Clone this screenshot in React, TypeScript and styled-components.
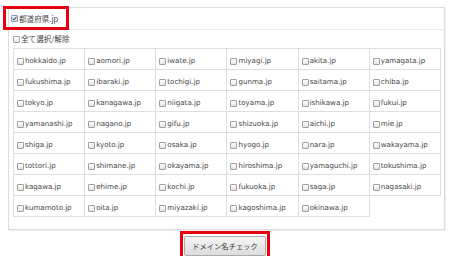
import { styled, createGlobalStyle } from "styled-components";

const GlobalStyle = createGlobalStyle`
  html, body {
    margin: 0;
    padding: 0;
    background: #FFFFFF;
  }
  body {
    font-family: "DejaVu Sans", "Noto Sans CJK JP", sans-serif;
    color: #333333;
  }
`;

const prefectures = [
  "hokkaido", "aomori", "iwate", "miyagi", "akita", "yamagata",
  "fukushima", "ibaraki", "tochigi", "gunma", "saitama", "chiba",
  "tokyo", "kanagawa", "niigata", "toyama", "ishikawa", "fukui",
  "yamanashi", "nagano", "gifu", "shizuoka", "aichi", "mie",
  "shiga", "kyoto", "osaka", "hyogo", "nara", "wakayama",
  "tottori", "shimane", "okayama", "hiroshima", "yamaguchi", "tokushima",
  "kagawa", "ehime", "kochi", "fukuoka", "saga", "nagasaki",
  "kumamoto", "oita", "miyazaki", "kagoshima", "okinawa",
];

const Page = styled.div`
  width: 450px;
  padding-top: 7px;
`;

const Panel = styled.div`
  margin-left: 8px;
  width: 435px;
  border: 1px solid #DDDDDD;
  box-shadow: 1px 1px 0 #EEEEEE;
  padding-bottom: 12px;
`;

const Header = styled.div`
  position: relative;
  height: 21px;
  display: flex;
  align-items: center;
  padding-left: 2px;
  border-bottom: 1px solid #E8E8E8;
`;

const Highlight = styled.div<{ $left: number; $top: number; $width: number; $height: number }>`
  position: absolute;
  left: ${p => p.$left}px;
  top: ${p => p.$top}px;
  width: ${p => p.$width}px;
  height: ${p => p.$height}px;
  border: 3px solid #E60012;
  box-sizing: border-box;
  pointer-events: none;
`;

const Label = styled.label<{ $jp?: boolean }>`
  display: inline-flex;
  align-items: center;
  gap: 1px;
  font-family: ${p => p.$jp ? '"Noto Sans CJK JP", sans-serif' : '"DejaVu Sans", "Noto Sans CJK JP", sans-serif'};
  font-size: ${p => p.$jp ? '7.6px' : '7.1px'};
  color: #444444;
  white-space: nowrap;
  line-height: 1;
`;

const Box = styled.span<{ $checked?: boolean }>`
  display: inline-flex;
  align-items: center;
  justify-content: center;
  width: 7px;
  height: 7px;
  box-sizing: border-box;
  border: 1px solid ${p => p.$checked ? '#7A9CC4' : '#A0A0A0'};
  background: ${p => p.$checked ? 'linear-gradient(#E8F0FA, #C9D9EE)' : 'linear-gradient(#FFFFFF, #E4E4E4)'};
  border-radius: 1px;
  flex-shrink: 0;
`;

const SelectAll = styled.div`
  height: 16px;
  display: flex;
  align-items: center;
  padding-left: 4px;
  margin-top: 1px;
`;

const Grid = styled.table`
  margin: 1px 0 0 4px;
  width: 428px;
  border-collapse: collapse;
  table-layout: fixed;
`;

const Cell = styled.td`
  height: 20px;
  padding: 0 0 0 3px;
  border: 1px solid #DEDEDE;
  vertical-align: middle;
`;

const ButtonRow = styled.div`
  position: relative;
  display: flex;
  justify-content: center;
  padding-top: 6px;
`;

const CheckButton = styled.button`
  width: 82px;
  height: 20px;
  padding: 0;
  border: 1px solid #ABABAB;
  border-radius: 2px;
  background: linear-gradient(#F6F6F6, #DCDCDC);
  font-family: "Noto Sans CJK JP", sans-serif;
  font-size: 7.3px;
  color: #333333;
  cursor: pointer;
`;

const Check = ({ checked }: { checked?: boolean }) => (
  <Box $checked={checked}>
    {checked && (
      <svg width="7" height="7" viewBox="0 0 7 7">
        <path d="M1 3.6 L2.8 5.4 L6.2 1" fill="none" stroke="#222" strokeWidth="1.3" />
      </svg>
    )}
  </Box>
);

const App = () => {
  const rows: string[][] = [];
  for (let i = 0; i < prefectures.length; i += 6) {
    rows.push(prefectures.slice(i, i + 6));
  }

  return (
    <Page>
      <GlobalStyle />
      <Panel>
        <Header>
          <Label $jp>
            <Check checked />
            都道府県.jp
          </Label>
          <Highlight $left={-6} $top={-2} $width={66} $height={24} />
        </Header>
        <SelectAll>
          <Label $jp>
            <Check />
            全て選択/解除
          </Label>
        </SelectAll>
        <Grid>
          <tbody>
            {rows.map((row, r) => (
              <tr key={r}>
                {row.map(name => (
                  <Cell key={name}>
                    <Label>
                      <Check />
                      {name}.jp
                    </Label>
                  </Cell>
                ))}
              </tr>
            ))}
          </tbody>
        </Grid>
      </Panel>
      <ButtonRow>
        <CheckButton>ドメイン名チェック</CheckButton>
        <Highlight $left={180} $top={1} $width={90} $height={31} />
      </ButtonRow>
    </Page>
  );
};

export default App;
